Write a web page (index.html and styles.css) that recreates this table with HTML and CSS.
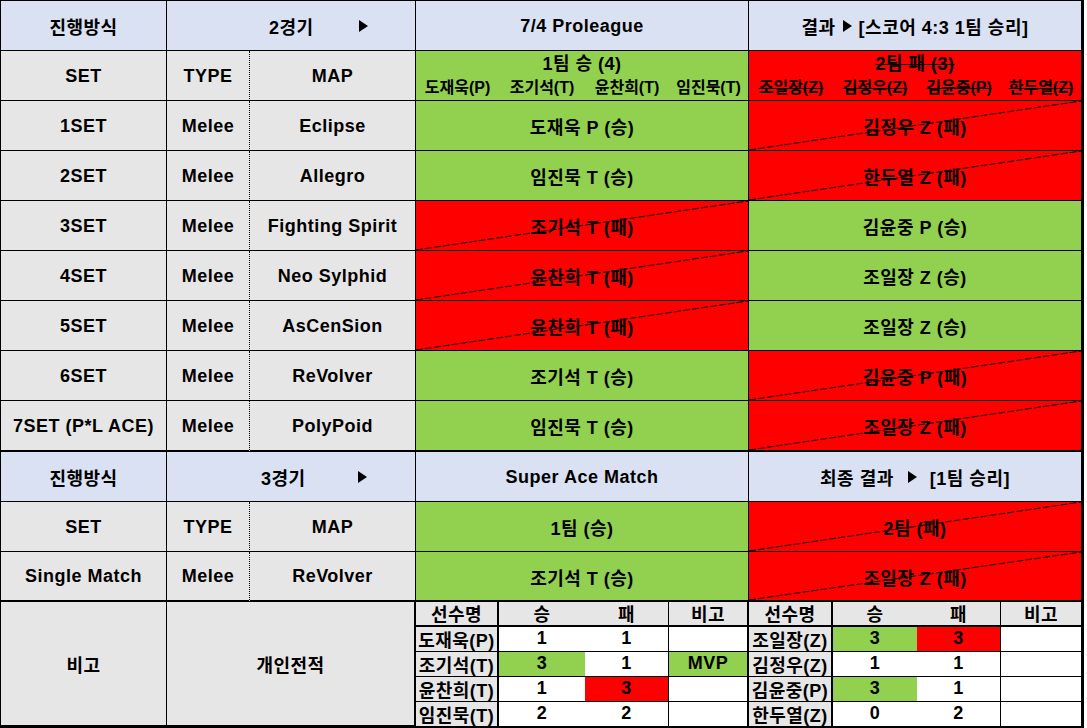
FILE: index.html
```html
<!DOCTYPE html>
<html lang="ko">
<head>
<meta charset="utf-8">
<title>Proleague</title>
<link rel="stylesheet" href="styles.css">
</head>
<body>
<div class="sheet">
  <!-- row 1 -->
  <div class="c blue">진행방식</div>
  <div class="c blue span2 game g2"><span>2경기</span><svg class="tri" width="9" height="12" viewBox="0 0 9 12"><path d="M0 0L9 6L0 12Z"/></svg></div>
  <div class="c blue span4">7/4 Proleague</div>
  <div class="c blue span4 last res"><span>결과</span><svg class="tri" width="9" height="12" viewBox="0 0 9 12"><path d="M0 0L9 6L0 12Z"/></svg><span>[스코어 4:3 1팀 승리]</span></div>

  <!-- row 2 -->
  <div class="c grey">SET</div>
  <div class="c grey dot">TYPE</div>
  <div class="c grey">MAP</div>
  <div class="c green span4 team t1">
    <div class="team-title">1팀 승 (4)</div>
    <div class="names n1"><span>도재욱(P)</span><span>조기석(T)</span><span>윤찬희(T)</span><span>임진묵(T)</span></div>
  </div>
  <div class="c red span4 last team strike">
    <div class="team-title">2팀 패 (3)</div>
    <div class="names n2"><span>조일장(Z)</span><span>김정우(Z)</span><span>김윤중(P)</span><span>한두열(Z)</span></div>
  </div>

  <!-- 1SET -->
  <div class="c grey">1SET</div>
  <div class="c grey dot">Melee</div>
  <div class="c grey">Eclipse</div>
  <div class="c green span4">도재욱 P (승)</div>
  <div class="c red span4 last x">김정우 Z (패)<svg class="diag"><line x1="0" y1="100%" x2="100%" y2="0"/></svg></div>

  <!-- 2SET -->
  <div class="c grey">2SET</div>
  <div class="c grey dot">Melee</div>
  <div class="c grey">Allegro</div>
  <div class="c green span4">임진묵 T (승)</div>
  <div class="c red span4 last x">한두열 Z (패)<svg class="diag"><line x1="0" y1="100%" x2="100%" y2="0"/></svg></div>

  <!-- 3SET -->
  <div class="c grey">3SET</div>
  <div class="c grey dot">Melee</div>
  <div class="c grey">Fighting Spirit</div>
  <div class="c red span4 x">조기석 T (패)<svg class="diag"><line x1="0" y1="100%" x2="100%" y2="0"/></svg></div>
  <div class="c green span4 last">김윤중 P (승)</div>

  <!-- 4SET -->
  <div class="c grey">4SET</div>
  <div class="c grey dot">Melee</div>
  <div class="c grey">Neo Sylphid</div>
  <div class="c red span4 x">윤찬희 T (패)<svg class="diag"><line x1="0" y1="100%" x2="100%" y2="0"/></svg></div>
  <div class="c green span4 last">조일장 Z (승)</div>

  <!-- 5SET -->
  <div class="c grey">5SET</div>
  <div class="c grey dot">Melee</div>
  <div class="c grey">AsCenSion</div>
  <div class="c red span4 x">윤찬희 T (패)<svg class="diag"><line x1="0" y1="100%" x2="100%" y2="0"/></svg></div>
  <div class="c green span4 last">조일장 Z (승)</div>

  <!-- 6SET -->
  <div class="c grey">6SET</div>
  <div class="c grey dot">Melee</div>
  <div class="c grey">ReVolver</div>
  <div class="c green span4">조기석 T (승)</div>
  <div class="c red span4 last x">김윤중 P (패)<svg class="diag"><line x1="0" y1="100%" x2="100%" y2="0"/></svg></div>

  <!-- 7SET -->
  <div class="c grey tb">7SET (P*L ACE)</div>
  <div class="c grey dot tb">Melee</div>
  <div class="c grey tb">PolyPoid</div>
  <div class="c green span4 tb">임진묵 T (승)</div>
  <div class="c red span4 last x tb">조일장 Z (패)<svg class="diag"><line x1="0" y1="100%" x2="100%" y2="0"/></svg></div>

  <!-- row 10 -->
  <div class="c blue">진행방식</div>
  <div class="c blue span2 game g3"><span>3경기</span><svg class="tri" width="9" height="12" viewBox="0 0 9 12"><path d="M0 0L9 6L0 12Z"/></svg></div>
  <div class="c blue span4">Super Ace Match</div>
  <div class="c blue span4 last res final"><span>최종 결과</span><svg class="tri" width="9" height="12" viewBox="0 0 9 12"><path d="M0 0L9 6L0 12Z"/></svg><span>[1팀 승리]</span></div>

  <!-- row 11 -->
  <div class="c grey">SET</div>
  <div class="c grey dot">TYPE</div>
  <div class="c grey">MAP</div>
  <div class="c green span4">1팀 (승)</div>
  <div class="c red span4 last x">2팀 (패)<svg class="diag"><line x1="0" y1="100%" x2="100%" y2="0"/></svg></div>

  <!-- row 12 -->
  <div class="c grey tb">Single Match</div>
  <div class="c grey dot tb">Melee</div>
  <div class="c grey tb">ReVolver</div>
  <div class="c green span4 tb">조기석 T (승)</div>
  <div class="c red span4 last x tb">조일장 Z (패)<svg class="diag"><line x1="0" y1="100%" x2="100%" y2="0"/></svg></div>

  <!-- bottom section -->
  <div class="c grey note">비고</div>
  <div class="c grey record">개인전적</div>

  <div class="c s grey sn sh">선수명</div>
  <div class="c s grey sw sh">승</div>
  <div class="c s grey sl sh">패</div>
  <div class="c s grey sb sh">비고</div>
  <div class="c s grey sn sh">선수명</div>
  <div class="c s grey sw sh">승</div>
  <div class="c s grey sl sh">패</div>
  <div class="c s grey last sh">비고</div>

  <div class="c s grey sn">도재욱(P)</div>
  <div class="c s white sw">1</div>
  <div class="c s white sl">1</div>
  <div class="c s white sb"></div>
  <div class="c s grey sn">조일장(Z)</div>
  <div class="c s green sw">3</div>
  <div class="c s red sl">3</div>
  <div class="c s white last"></div>

  <div class="c s grey sn">조기석(T)</div>
  <div class="c s green sw">3</div>
  <div class="c s white sl">1</div>
  <div class="c s green sb">MVP</div>
  <div class="c s grey sn">김정우(Z)</div>
  <div class="c s white sw">1</div>
  <div class="c s white sl">1</div>
  <div class="c s white last"></div>

  <div class="c s grey sn">윤찬희(T)</div>
  <div class="c s white sw">1</div>
  <div class="c s red sl">3</div>
  <div class="c s white sb"></div>
  <div class="c s grey sn">김윤중(P)</div>
  <div class="c s green sw">3</div>
  <div class="c s white sl">1</div>
  <div class="c s white last"></div>

  <div class="c s grey sn nb">임진묵(T)</div>
  <div class="c s white sw nb">2</div>
  <div class="c s white sl nb">2</div>
  <div class="c s white sb nb"></div>
  <div class="c s grey sn nb">한두열(Z)</div>
  <div class="c s white sw nb">0</div>
  <div class="c s white sl nb">2</div>
  <div class="c s white last nb"></div>
</div>
</body>
</html>
```

FILE: styles.css
```css
html, body {
  margin: 0;
  padding: 0;
  background: #ffffff;
}

body {
  font-family: "Liberation Sans", "Noto Sans CJK KR", sans-serif;
  font-size: 18px;
  letter-spacing: 0.5px;
  font-weight: 700;
  color: #000;
}

.sheet {
  display: grid;
  width: 1084px;
  box-sizing: border-box;
  border-top: 1px solid #000;
  border-left: 1px solid #000;
  border-right: 3px solid #000;
  border-bottom: 2px solid #000;
  grid-template-columns: 166px 83px 166px 83px 86px 84px 80px 84px 84px 84px 80px;
  grid-template-rows: repeat(8, 50px) 51px 50px 50px 50px 25px 25px 25px 25px 24px;
}

.c {
  box-sizing: border-box;
  display: flex;
  align-items: center;
  justify-content: center;
  border-right: 1px solid #000;
  border-bottom: 1px solid #000;
  white-space: nowrap;
  padding-top: 1px;
}

.blue  { background: #d9e1f2; }
.grey  { background: #e7e6e6; }
.green { background: #92d050; }
.red   { background: #ff0000; }
.white { background: #ffffff; }

.dot { border-right: 1px dotted #000; }
.span2 { grid-column: span 2; }
.span4 { grid-column: span 4; }
.last { border-right: none; }
.tb { border-bottom: 2px solid #000; }

/* triangles */
.tri {
  display: block;
  fill: #000;
  flex: none;
}

.game { justify-content: flex-start; }
.g2 { padding-left: 102px; }
.g2 .tri { margin-left: 45px; }
.g3 { padding-left: 94px; }
.g3 .tri { margin-left: 52px; }

.res .tri { margin: 0 7px 0 7px; }
.final .tri { margin: 0 13px 0 14px; }

/* team header */
.team {
  flex-direction: column;
  justify-content: flex-start;
  padding-top: 0;
}
.team-title {
  margin-top: 2px;
  height: 25px;
  line-height: 23px;
}
.names {
  display: grid;
  width: 100%;
  font-size: 16px;
  letter-spacing: 0;
  line-height: 20px;
  text-align: center;
}
.n1 { grid-template-columns: 83px 86px 84px 1fr; }
.n2 { grid-template-columns: 84px 84px 84px 1fr; }
.strike .team-title,
.strike .names span {
  text-decoration: line-through;
  text-decoration-thickness: 1px;
}

/* diagonal */
.x { position: relative; }
.diag {
  position: absolute;
  left: 0;
  top: 0;
  width: 100%;
  height: 100%;
  pointer-events: none;
}
.diag line {
  stroke: #000;
  stroke-width: 1;
  stroke-dasharray: 7 2;
}

/* bottom section */
.note { grid-row: span 5; }
.record {
  grid-column: span 2;
  grid-row: span 5;
  border-right: 2px solid #000;
}
.s { padding-top: 0; padding-bottom: 1px; }
.sn { border-right: 2px solid #000; }
.sw { border-right: none; }
.sl { border-right: 1px solid #000; }
.sb { border-right: 2px solid #000; }
.sh { border-bottom: 2px solid #000; }
.nb { border-bottom: none; }
```
